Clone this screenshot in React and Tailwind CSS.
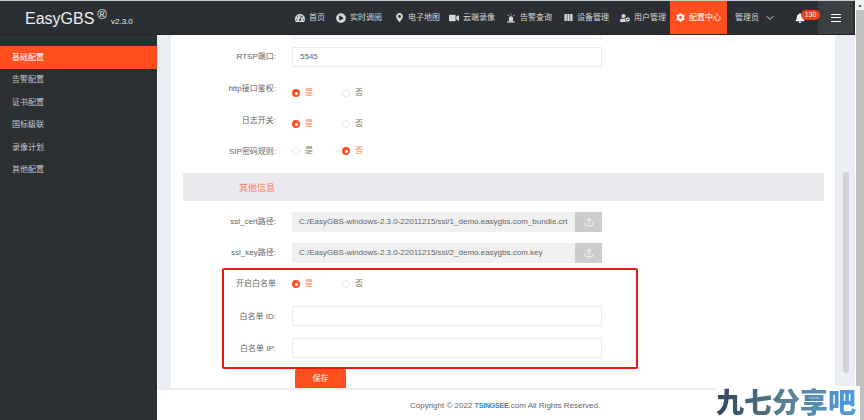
import { ChevronDown, Upload } from "lucide-react"
import { FaBell, FaCog, FaMapMarkerAlt, FaPlayCircle, FaTachometerAlt, FaUserCog, FaVideo } from "react-icons/fa"

const font = "font-['Liberation_Sans','Noto_Sans_CJK_SC',sans-serif]"

function AlarmIcon() {
  return (
    <svg viewBox="0 0 12 12" className="size-[10px]" fill="currentColor">
      <path d="M3.5 10V6.5a2.5 2.5 0 0 1 5 0V10z" />
      <rect x="1.5" y="10" width="9" height="1.5" />
      <path d="M5.6 1h.8v2h-.8zM1.6 2.6l.6-.6 1.4 1.4-.6.6zM10.4 2.6l-.6-.6-1.4 1.4.6.6z" />
    </svg>
  )
}

function BookIcon() {
  return (
    <svg viewBox="0 0 10 10" className="size-[9px]" fill="currentColor">
      <path d="M0.5 1h2.6v8H0.5zM3.8 1h2.4v8H3.8zM6.9 1h2.6v8H6.9z" />
    </svg>
  )
}

const nav = [
  { label: "首页", icon: <FaTachometerAlt className="size-[10px]" />, w: "w-[41px]" },
  { label: "实时调阅", icon: <FaPlayCircle className="size-[10px]" />, w: "w-[59px]" },
  { label: "电子地图", icon: <FaMapMarkerAlt className="size-[9px]" />, w: "w-[54px]" },
  { label: "云端录像", icon: <FaVideo className="size-[10px]" />, w: "w-[57px]" },
  { label: "告警查询", icon: <AlarmIcon />, w: "w-[58px]" },
  { label: "设备管理", icon: <BookIcon />, w: "w-[56px]" },
  { label: "用户管理", icon: <FaUserCog className="size-[10px]" />, w: "w-[51px]" },
]

const menu = ["基础配置", "告警配置", "证书配置", "国标级联", "录像计划", "其他配置"]

function Header() {
  return (
    <header className="h-[34px] shrink-0 bg-[#2b2f33] flex items-center text-[#d6d8da] border-b border-[#24272a]">
      <div className="w-[295px] pl-[25px] flex items-baseline text-[#eef0f1] pt-[2px]">
        <span className="text-[16px] leading-none">EasyGBS</span>
        <span className="text-[13px] leading-none ml-[3px] -translate-y-[5px]">®</span>
        <span className="text-[8px] leading-none ml-[4px]">v2.3.0</span>
      </div>
      {nav.map((item) => (
        <div key={item.label} className={`${item.w} shrink-0 flex items-center gap-[4px] text-[8px]`}>
          {item.icon}
          <span className="whitespace-nowrap">{item.label}</span>
        </div>
      ))}
      <div className="w-[57px] h-full ml-[-1px] shrink-0 bg-[#ff4f1f] text-white flex items-center justify-center gap-[4px] text-[8px]">
        <FaCog className="size-[9px]" />
        <span>配置中心</span>
      </div>
      <div className="w-[68px] pl-[8px] shrink-0 flex items-center gap-[5px] text-[8px]">
        <span>管理员</span>
        <ChevronDown className="size-[12px]" />
      </div>
      <div className="w-[23px] shrink-0 relative">
        <FaBell className="size-[10px] text-white" />
        <span className="absolute left-[6px] top-[-3px] h-[10px] w-[19px] rounded-full bg-[#f4401c] text-white text-[7px] leading-[10px] text-center">130</span>
      </div>
      <div className="w-[35px] h-full shrink-0 bg-[#3a3f42] flex flex-col items-center justify-center gap-[2.5px]">
        <i className="block w-[10px] h-px bg-white" />
        <i className="block w-[10px] h-px bg-white" />
        <i className="block w-[10px] h-px bg-white" />
      </div>
    </header>
  )
}

function Sidebar() {
  return (
    <aside className="w-[157px] shrink-0 bg-[#2c3033] pt-[11px] text-[8px] text-[#c4c6c8]">
      {menu.map((m, i) => (
        <div key={m} className={`h-[22.5px] pl-[12px] pt-[1px] flex items-center ${i === 0 ? "bg-[#ff4f1f] text-white" : ""}`}>
          {m}
        </div>
      ))}
    </aside>
  )
}

function Label({ children, className = "" }) {
  return <div className={`w-[105px] mr-[16px] shrink-0 text-right text-[8px] text-[#666] ${className}`}>{children}</div>
}

function TextInput({ value }) {
  return (
    <div className="w-[310px] h-[20px] px-[7px] border border-[#e8ebf0] bg-white text-[8px] leading-[18px] text-[#666]">
      {value}
    </div>
  )
}

function PathInput({ value }) {
  return (
    <div className="w-[310px] h-[20px] flex text-[8px] text-[#666]">
      <div className="flex-1 px-[7px] leading-[20px] bg-[#f0f0f0] whitespace-nowrap overflow-hidden">{value}</div>
      <div className="w-[27px] bg-[#cccccc] flex items-center justify-center text-white">
        <Upload className="size-[10px]" />
      </div>
    </div>
  )
}

function Radio({ label, on }) {
  return (
    <div className={`w-[50px] flex items-center gap-[5px] text-[8px] ${on ? "text-[#ff7a5c]" : "text-[#777]"}`}>
      {on ? (
        <span className="size-[8px] rounded-full bg-[#ff4f1f] flex items-center justify-center">
          <i className="block size-[3px] rounded-full bg-white" />
        </span>
      ) : (
        <span className="size-[8px] rounded-full border border-[#e4e6ea] bg-white" />
      )}
      <span>{label}</span>
    </div>
  )
}

function RadioRow({ label, yes, className, labelClass }) {
  return (
    <div className={`h-[16px] flex items-center ${className}`}>
      <Label className={labelClass}>{label}</Label>
      <Radio label="是" on={yes} />
      <Radio label="否" on={!yes} />
    </div>
  )
}

function Form() {
  return (
    <div className="bg-white h-[353px] w-[664px] shrink-0 flex flex-col">
      <div className="ml-[121px] w-[310px] h-[4px] border border-t-0 border-[#e8ebf0]" />
      <div className="mt-[8px] flex items-center">
        <Label>RTSP端口:</Label>
        <TextInput value="5545" />
      </div>
      <RadioRow label="http接口鉴权:" yes className="mt-[18px]" labelClass="-translate-y-[4px]" />
      <RadioRow label="日志开关:" yes className="mt-[15px]" labelClass="-translate-y-[3px]" />
      <RadioRow label="SIP密码规则:" yes={false} className="mt-[11px]" labelClass="translate-y-[1px]" />
      <div className="mt-[14px] ml-[12px] w-[641px] h-[28px] shrink-0 bg-[#e9eaed] flex items-center pt-[3px]">
        <div className="w-[92px] text-right text-[9px] text-[#ff7a5c]">其他信息</div>
      </div>
      <div className="mt-[11px] flex items-center">
        <Label>ssl_cert路径:</Label>
        <PathInput value="C:/EasyGBS-windows-2.3.0-22011215/ssl/1_demo.easygbs.com_bundle.crt" />
      </div>
      <div className="mt-[11px] flex items-center">
        <Label>ssl_key路径:</Label>
        <PathInput value="C:/EasyGBS-windows-2.3.0-22011215/ssl/2_demo.easygbs.com.key" />
      </div>
      <RadioRow label="开启白名单" yes className="mt-[13px]" />
      <div className="mt-[14px] flex items-center">
        <Label className="pt-[1px]">白名单 ID:</Label>
        <TextInput />
      </div>
      <div className="mt-[12px] flex items-center">
        <Label className="pt-[1px]">白名单 IP:</Label>
        <TextInput />
      </div>
      <div className="mt-[11px] ml-[124px] w-[51px] h-[19px] pt-[1px] rounded-t-[2px] bg-[#ff4f1f] text-white text-[8px] flex items-center justify-center">
        保存
      </div>
    </div>
  )
}

function Main() {
  return (
    <main className="flex-1 flex flex-col bg-[#eaedf3] relative">
      <div className="flex flex-1 min-h-0">
        <div className="w-[14px] shrink-0" />
        <Form />
        <div className="flex-1 pl-[8px] pt-[137px]">
          <div className="w-[6px] h-[201px] rounded-full bg-[#d2d4d8]" />
        </div>
      </div>
      <footer className="h-[30px] mt-[2px] pt-[2px] bg-white text-[8px] text-[#666] flex items-center pl-[253px] shrink-0">
        Copyright © 2022&nbsp;
        <span className="text-[#2b8ad8] font-bold text-[7px] tracking-tight">TSINGSEE</span>
        .com All Rights Reserved.
      </footer>
      <div className="absolute left-[65px] top-[233px] w-[416px] h-[101px] border-2 border-[#f01414] rounded-[2px]" />
    </main>
  )
}

export default function App() {
  return (
    <div className={`w-[864px] h-[420px] overflow-hidden relative flex bg-white ${font}`}>
      <div className="w-[855px] shrink-0 flex flex-col border-t border-[#c9cbcd]">
        <Header />
        <div className="flex flex-1 min-h-0">
          <Sidebar />
          <Main />
        </div>
      </div>
      <div className="w-[8px] ml-[1px] flex flex-col">
        <div className="h-[10px] bg-[#f1f1f1] text-[#555] text-[5px] leading-[10px] text-center">▲</div>
        <div className="flex-1 bg-[#c1c1c1]" />
      </div>
      <div className="absolute right-[4px] bottom-0 w-[144px] h-[34px] bg-white text-[28px] leading-[30px] font-black font-['Noto_Sans_CJK_SC',sans-serif] whitespace-nowrap">
        <span className="bg-gradient-to-r from-[#33475f] via-[#5c7f92] to-[#4a9be6] bg-clip-text text-transparent">九七分享吧</span>
      </div>
    </div>
  )
}
